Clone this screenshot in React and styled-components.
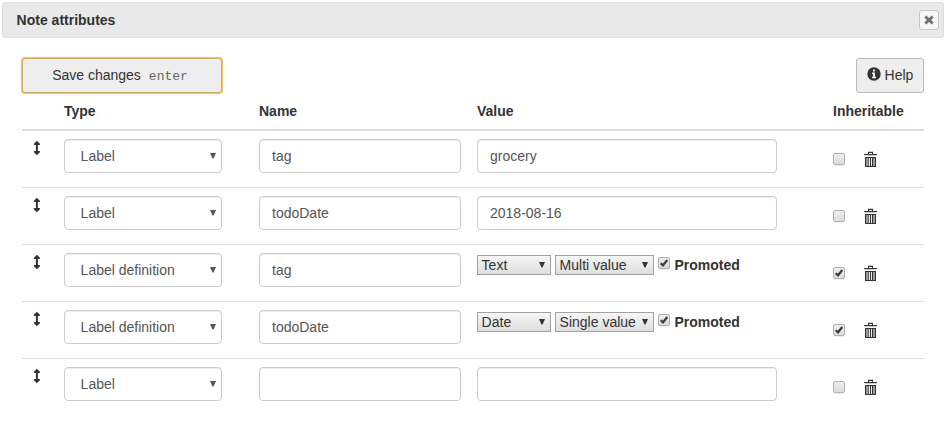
import React from "react";
import styled, { createGlobalStyle } from "styled-components";

const GlobalStyle = createGlobalStyle`
  * { box-sizing: border-box; }
  body {
    margin: 0;
    background: #fff;
    color: #333;
    font-family: "Liberation Sans", Arial, sans-serif;
    font-size: 14px;
    line-height: 20px;
  }
`;

const Dialog = styled.div`
  width: 946px;
  height: 423px;
  padding: 2px;
  overflow: hidden;
`;

const TitleBar = styled.header`
  display: flex;
  align-items: center;
  justify-content: space-between;
  height: 36px;
  padding: 0 4px 0 13.6px;
  border: 1px solid #ddd;
  border-radius: 3px;
  background: #e9e9e9;
  font-weight: bold;
`;

const CloseButton = styled.button`
  display: flex;
  align-items: center;
  justify-content: center;
  width: 20px;
  height: 20px;
  padding: 0;
  border: 1px solid #c5c5c5;
  border-radius: 3px;
  background: #f6f6f6;
`;

const Content = styled.main`
  padding: 20px 20px 0;
`;

const Toolbar = styled.div`
  display: flex;
  justify-content: space-between;
  height: 35px;
`;

const Button = styled.button`
  display: flex;
  align-items: center;
  justify-content: center;
  height: 35px;
  padding: 0 0 1px;
  border: 1px solid #bbb;
  border-radius: 3px;
  background: #eee;
  color: #333;
  font: 14px/20px "Liberation Sans", Arial, sans-serif;
`;

const SaveButton = styled(Button)`
  width: 200px;
  padding-right: 4px;
  border-color: #d3ab62;
  box-shadow: 0 0 0 1px #efc16b;
`;

const HelpButton = styled(Button)`
  width: 68px;
  gap: 4px;
  padding-bottom: 2px;
`;

const Key = styled.kbd`
  margin: 3px 0 0 8px;
  font: 13px/18px "Liberation Mono", "Courier New", monospace;
  color: #666;
`;

const Row = styled.div`
  display: grid;
  grid-template-columns: 34px 195px 218px 356px 99px;
  height: 57px;
  border-top: 1px solid #ddd;
`;

const HeadRow = styled(Row)`
  height: 38px;
  border-top: 0;
  border-bottom: 2px solid #ddd;
  font-weight: bold;

  & + ${Row} {
    height: 56px;
    border-top: 0;
  }
`;

const Cell = styled.div`
  padding: 8px 8px 0;
`;

const DragCell = styled(Cell)`
  padding: 9px 0 0 11px;
`;

const InheritCell = styled(Cell)`
  display: flex;
  align-items: flex-start;
  gap: 19px;
  padding-top: 20px;
`;

const ValueOptions = styled.div`
  display: flex;
  align-items: flex-start;
  padding-top: 2px;
`;

const Input = styled.input`
  display: block;
  width: ${(p) => p.$width}px;
  height: 34px;
  padding: 6px 12px;
  border: 1px solid #ccc;
  border-radius: 4px;
  outline: 0;
  background: #fff;
  box-shadow: inset 0 1px 1px rgba(0, 0, 0, 0.075);
  color: #555;
  font: 14px/20px "Liberation Sans", Arial, sans-serif;
`;

const SelectBox = styled.div`
  display: flex;
  align-items: center;
  justify-content: space-between;
  width: 158px;
  height: 34px;
  padding: 0 5px 0 15.6px;
  border: 1px solid #ccc;
  border-radius: 4px;
  box-shadow: inset 0 1px 1px rgba(0, 0, 0, 0.075);
  color: #555;
`;

const SmallSelect = styled.div`
  display: flex;
  align-items: center;
  justify-content: space-between;
  width: ${(p) => p.$width}px;
  height: 20px;
  margin-right: 4px;
  padding: 0 5px 0 3.6px;
  border: 1px solid #a2a2a2;
  background: linear-gradient(#f6f6f6, #dedede);
  white-space: nowrap;
`;

const Check = styled.span`
  display: flex;
  align-items: center;
  justify-content: center;
  flex: none;
  width: 12px;
  height: 12px;
  border: 1px solid #b0b0b0;
  border-radius: 2px;
  background: linear-gradient(#eee, #dcdcdc);
  box-shadow: 0 1px 0 rgba(0, 0, 0, 0.06);
`;

const InheritCheck = styled(Check)`
  margin-top: 2px;
`;

const PromotedCheck = styled(Check)`
  margin: 2px 4.5px 0 0;
`;

const Icon = styled.svg`
  display: block;
  flex: none;
`;

const CheckMark = () => (
  <Icon width="10" height="10" viewBox="0 0 10 10">
    <path d="M1.7 5.2 4 7.3 8.3 2" fill="none" stroke="#3c3c3c" strokeWidth="2.2" />
  </Icon>
);

const Caret = () => (
  <Icon width="6" height="6" viewBox="0 0 6 6">
    <path d="M0 0h6L3.5 5.5h-1z" fill="currentColor" />
  </Icon>
);

const DragIcon = () => (
  <Icon width="8" height="16" viewBox="0 0 8 16">
    <path d="M3.9 .8 6.9 3.8V5H4.9v6h2v1.2L3.9 15.2.9 12.2V11h2V5H.9V3.8z" fill="#333" />
  </Icon>
);

const TrashIcon = () => (
  <Icon width="13" height="16" viewBox="0 0 13 16" shapeRendering="crispEdges">
    <path d="M4 1h5v2H8V2H5v1H4zM0 3h13v1H0zM1 6h11v10H1z" fill="#333" />
    <path d="M1 4h11v1H1zM4 0h5v1H4z" fill="#ccc" />
    <path d="M2 7h2v8H2zM9 7h2v8H9z" fill="#999" />
    <path d="M5 7h1v8H5zM7 7h1v8H7z" fill="#eee" />
    <path d="M4 7h1v8H4z" fill="#666" />
  </Icon>
);

const CloseIcon = () => (
  <Icon width="10" height="10" viewBox="0 0 10 10">
    <path d="m1.3 1.5 7.4 7M8.7 1.5l-7.4 7" stroke="#707070" strokeWidth="3" />
  </Icon>
);

const InfoGlyph = styled(Icon)`
  margin-bottom: 2px;
`;

const InfoIcon = () => (
  <InfoGlyph width="14" height="14" viewBox="0 0 14 14">
    <circle cx="7" cy="7" r="6.7" fill="#333" />
    <path d="M6 2.5h2v2H6zM5 5.6h3v4.2h1v1.5H5V9.8h1V7H5z" fill="#eee" />
  </InfoGlyph>
);

const attributes = [
  { type: "Label", name: "tag", value: "grocery" },
  { type: "Label", name: "todoDate", value: "2018-08-16" },
  { type: "Label definition", name: "tag", kind: "Text", multiplicity: "Multi value", inheritable: true },
  { type: "Label definition", name: "todoDate", kind: "Date", multiplicity: "Single value", inheritable: true },
  { type: "Label", name: "", value: "" },
];

function AttributeRow({ item }) {
  return (
    <Row>
      <DragCell><DragIcon /></DragCell>
      <Cell><SelectBox>{item.type}<Caret /></SelectBox></Cell>
      <Cell><Input $width={202} defaultValue={item.name} /></Cell>
      <Cell>
        {item.kind ? (
          <ValueOptions>
            <SmallSelect $width={74}>{item.kind}<Caret /></SmallSelect>
            <SmallSelect $width={99}>{item.multiplicity}<Caret /></SmallSelect>
            <PromotedCheck><CheckMark /></PromotedCheck>
            <b>Promoted</b>
          </ValueOptions>
        ) : (
          <Input $width={300} defaultValue={item.value} />
        )}
      </Cell>
      <InheritCell>
        <InheritCheck>{item.inheritable && <CheckMark />}</InheritCheck>
        <TrashIcon />
      </InheritCell>
    </Row>
  );
}

export default function App() {
  return (
    <>
      <GlobalStyle />
      <Dialog>
        <TitleBar>
          Note attributes
          <CloseButton aria-label="Close"><CloseIcon /></CloseButton>
        </TitleBar>
        <Content>
          <Toolbar>
            <SaveButton>Save changes<Key>enter</Key></SaveButton>
            <HelpButton><InfoIcon />Help</HelpButton>
          </Toolbar>
          <HeadRow>
            <Cell />
            <Cell>Type</Cell>
            <Cell>Name</Cell>
            <Cell>Value</Cell>
            <Cell>Inheritable</Cell>
          </HeadRow>
          {attributes.map((item, i) => <AttributeRow key={i} item={item} />)}
        </Content>
      </Dialog>
    </>
  );
}
